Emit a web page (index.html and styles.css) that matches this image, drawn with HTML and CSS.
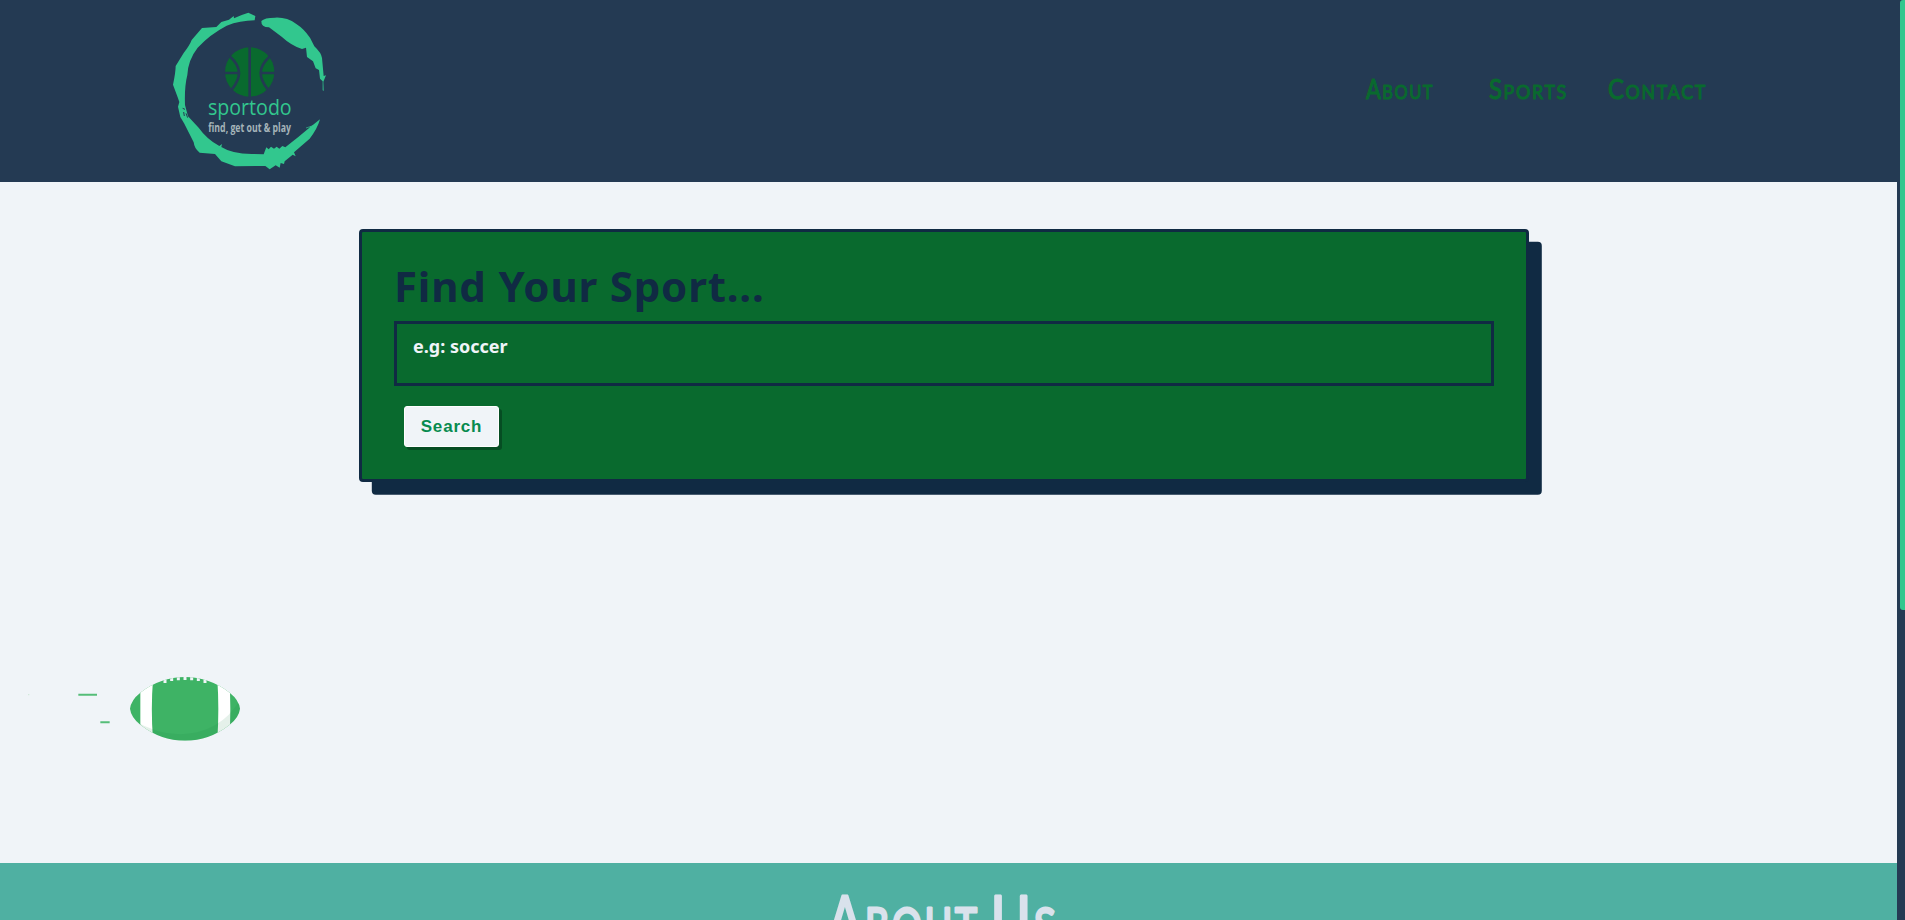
FILE: index.html
```html
<!DOCTYPE html>
<html lang="en">
<head>
<meta charset="utf-8">
<title>sportodo</title>
<link rel="stylesheet" href="styles.css">
</head>
<body>
<div class="page">
  <header class="header">
    <svg class="logo" viewBox="0 0 540 546" role="img" aria-label="sportodo">
      <g fill="#32c78e">
        <path d="M286 48 L284 61 Q240 62 200 77 Q150 103 113 143 Q84 180 82 225 Q73 260 75 315 L84 349 L116 383 Q140 417 178 438 L186 432 L184 441 Q215 461 275 462 L311 463 L319 442 L326 448 L333 440 L342 446 L350 440 L358 446 L367 438 L376 442 Q415 412 450 382 L480 358 Q472 387 449 416 L402 457 L407 469 L398 464 L374 484 L372 492 L362 489 L359 503 L347 496 L329 508 L316 498 L225 499 L184 484 L165 462 L119 458 Q103 446 101 427 L73 371 L61 351 L54 320 L58 306 L53 292 L39 254 Q47 216 47 198 L71 159 Q89 136 95 120 L126 84 L169 81 L184 66 L207 59 L221 48 L222 55 Q247 43 265 38 Z"/>
        <path d="M304 63 Q313 53 345 53 Q380 51 409 72 Q431 86 450 113 L463 139 Q484 159 486 174 L491 228 L498 226 L490 245 L491 273 L488 271 L488 244 L480 236 L477 210 L467 205 L459 184 L441 171 L438 143 L426 147 Q393 136 365 110 L327 82 Q303 82 304 63 Z"/>
      </g>
      <path d="M71 336 L73 348 M78 340 L83 353 M68 325 L75 328" stroke="#243a53" stroke-width="3"/>
      <path d="M449 386 L452 379 M438 384 L459 377" stroke="#32c78e" stroke-width="2"/>
      <circle cx="269" cy="216" r="74" fill="#096a2e"/>
      <g fill="none" stroke="#243a53" stroke-width="8">
        <path d="M269 140 V292 M193 219 H237 M301 219 H345"/>
        <path d="M209 169 Q237 194 237 219 Q237 241 216 268"/>
        <path d="M330 169 Q302 194 302 219 Q302 241 323 268"/>
      </g>
      <text class="logo-name" x="144" y="345" textLength="251" lengthAdjust="spacingAndGlyphs">sportodo</text>
      <text class="logo-tag" x="145" y="396" textLength="248" lengthAdjust="spacingAndGlyphs">find, get out &amp; play</text>
    </svg>
    <nav class="nav">
      <svg class="nav-link" width="67" height="32"><text x="0" y="26" textLength="68" lengthAdjust="spacingAndGlyphs">A<tspan class="small">BOUT</tspan></text></svg>
      <svg class="nav-link nav-sports" width="77" height="32"><text x="-1" y="26" textLength="79" lengthAdjust="spacingAndGlyphs">S<tspan class="small">PORTS</tspan></text></svg>
      <svg class="nav-link nav-contact" width="98" height="32"><text x="-1" y="26" textLength="99" lengthAdjust="spacingAndGlyphs">C<tspan class="small">ONTACT</tspan></text></svg>
    </nav>
  </header>
  <main class="main">
    <form class="search-card">
      <label class="search-title" for="sport">Find Your Sport...</label>
      <textarea class="search-input" id="sport" placeholder="e.g: soccer"></textarea>
      <button class="search-button" type="button">Search</button>
    </form>
    <svg class="football" viewBox="0 0 780 300" aria-hidden="true">
      <defs>
        <clipPath id="ball"><path d="M390 146 Q393 120 421 98 Q482 51 555 51 Q628 51 689 98 Q717 120 720 146 Q717 172 689 194 Q628 242 555 242 Q482 242 421 194 Q393 172 390 146 Z"/></clipPath>
      </defs>
      <path d="M235 104 H291 M301 187 H329" stroke="#55bd78" stroke-width="6"/>
      <path d="M84 104 H88" stroke="#d2eadc" stroke-width="4"/>
      <g clip-path="url(#ball)">
        <rect x="388" y="48" width="335" height="198" fill="#3eb365"/>
        <path d="M421 60 H459 Q452 146 459 240 H421 Z M652 60 H688 Q694 146 688 240 H652 Q658 146 652 60 Z" fill="#fff"/>
        <path d="M400 180 Q470 223 540 223 Q660 220 720 120 V250 H400 Z" fill="#15803d" opacity=".11"/>
        <path d="M495 48 V69 M515 45 V63 M535 45 V61 M555 45 V60 M575 45 V61 M595 45 V63 M615 48 V69" stroke="#f0f4f8" stroke-width="9"/>
      </g>
    </svg>
  </main>
  <section class="about">
    <svg class="about-title" width="228" height="66" role="heading" aria-level="2">
      <text x="-2" y="59" textLength="152" lengthAdjust="spacingAndGlyphs">A<tspan class="small">BOUT</tspan></text>
      <text x="161" y="59" textLength="68" lengthAdjust="spacingAndGlyphs">U<tspan class="small">S</tspan></text>
    </svg>
  </section>
</div>
<div class="scroll-track"><div class="scroll-thumb"></div></div>
</body>
</html>
```
FILE: styles.css
```css
* { box-sizing: border-box; }
body {
  display: flex;
  height: 920px;
  margin: 0;
  overflow: hidden;
  background: #f0f4f8;
  font-family: "Noto Sans", sans-serif;
}
.page {
  display: flex;
  flex: 1;
  flex-direction: column;
  height: 920px;
  overflow: hidden;
}
.header {
  display: flex;
  flex: none;
  justify-content: space-between;
  height: 182px;
  padding: 0 190px 0 160px;
  background: #243a53;
}
.logo { width: 180px; height: 182px; }
.logo-name { fill: #32c78e; font: 68px "Open Sans", sans-serif; }
.logo-tag { fill: #a5b4b9; font: bold 39px "Open Sans", sans-serif; }
.nav { display: flex; padding-top: 73px; }
.nav-link {
  overflow: visible;
  fill: #096a2e;
  stroke: #096a2e;
  stroke-width: 1.1px;
  stroke-linejoin: round;
  font: 400 26px Lato, sans-serif;
  letter-spacing: 1.8px;
}
.nav-link .small { font-size: 19.5px; }
.nav-sports { margin-left: 57px; }
.nav-contact { margin-left: 42px; }
.main {
  flex: none;
  height: 681px;
  padding-top: 47px;
}
.search-card {
  display: flex;
  flex-direction: column;
  align-items: flex-start;
  width: 1170px;
  height: 253px;
  margin-left: 359px;
  padding: 27px 32px;
  border: 3px solid #102a43;
  border-radius: 4px;
  background: #096a2e;
  box-shadow: 12.8px 12.8px 0 #102a43;
}
.search-title {
  height: 62px;
  color: #102a43;
  font-size: 42px;
  font-weight: 700;
  line-height: 54px;
  letter-spacing: 0.8px;
}
.search-input {
  flex: none;
  width: 1100px;
  height: 65px;
  padding: 10px 16px;
  border: 3px solid #102a43;
  background: transparent;
  font: 700 18px/25px "Noto Sans", sans-serif;
  resize: none;
}
.search-input::placeholder { color: #f0f4f8; opacity: 1; }
.search-button {
  width: 95px;
  height: 41px;
  margin: 20px 0 0 10px;
  padding: 0;
  border: 1px solid #fff;
  border-radius: 3px;
  background: #f0f4f8;
  box-shadow: 3px 3px 0 #064d23;
  color: #078b4f;
  font: 700 17px "Liberation Sans", sans-serif;
  letter-spacing: 0.8px;
}
.football {
  display: block;
  width: 260px;
  height: 100px;
  margin-top: 178px;
}
.about {
  display: flex;
  flex: none;
  height: 120px;
  justify-content: center;
  padding: 21px 9px 0 0;
  background: #4fb0a2;
}
.about-title {
  overflow: visible;
  fill: #d9e2ec;
  stroke: #d9e2ec;
  stroke-width: 3px;
  stroke-linejoin: round;
  font: 400 66px Lato, sans-serif;
  letter-spacing: 4px;
}
.about-title .small { font-size: 49px; }
.scroll-track {
  width: 8px;
  height: 920px;
  padding-left: 3px;
  background: #243a53;
}
.scroll-thumb {
  height: 610px;
  border-radius: 3px 0 0 3px;
  background: #32c78e;
}
```
